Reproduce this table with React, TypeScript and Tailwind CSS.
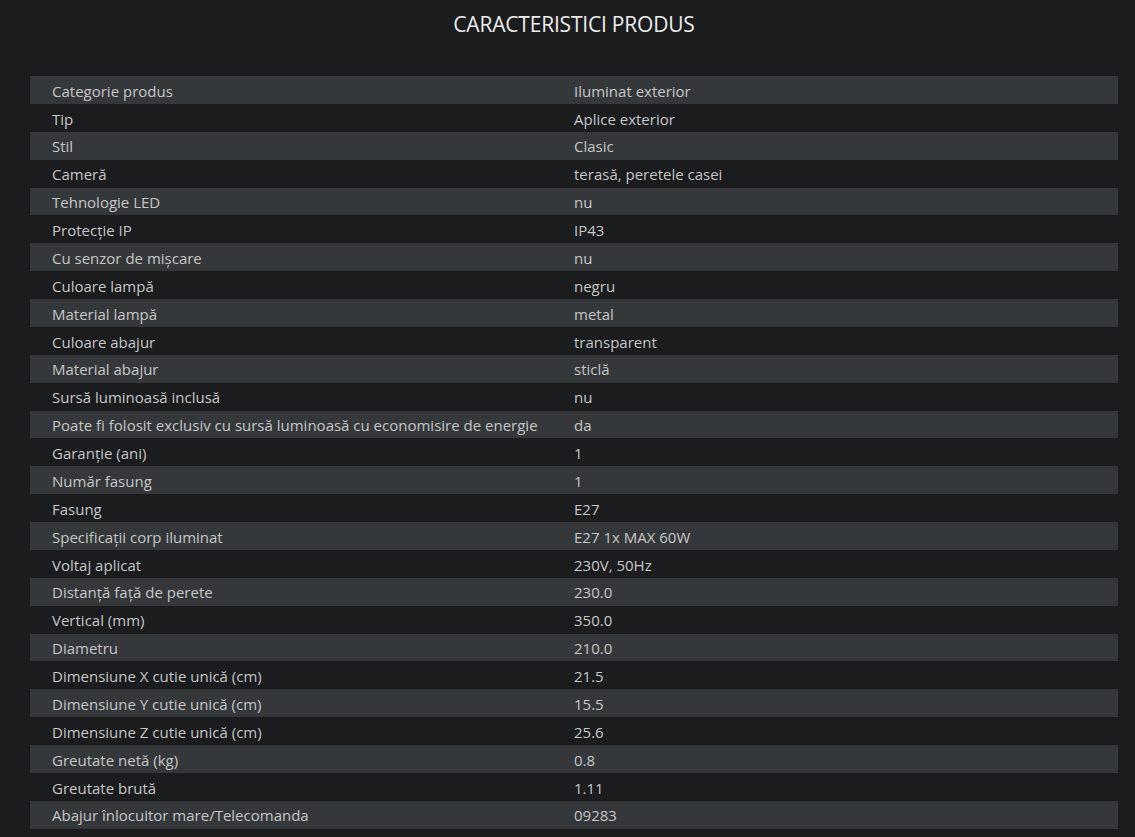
import React from "react";

const ROWS: [string, string][] = [
  ["Categorie produs", "Iluminat exterior"],
  ["Tip", "Aplice exterior"],
  ["Stil", "Clasic"],
  ["Cameră", "terasă, peretele casei"],
  ["Tehnologie LED", "nu"],
  ["Protecție IP", "IP43"],
  ["Cu senzor de mișcare", "nu"],
  ["Culoare lampă", "negru"],
  ["Material lampă", "metal"],
  ["Culoare abajur", "transparent"],
  ["Material abajur", "sticlă"],
  ["Sursă luminoasă inclusă", "nu"],
  ["Poate fi folosit exclusiv cu sursă luminoasă cu economisire de energie", "da"],
  ["Garanție (ani)", "1"],
  ["Număr fasung", "1"],
  ["Fasung", "E27"],
  ["Specificații corp iluminat", "E27 1x MAX 60W"],
  ["Voltaj aplicat", "230V, 50Hz"],
  ["Distanță față de perete", "230.0"],
  ["Vertical (mm)", "350.0"],
  ["Diametru", "210.0"],
  ["Dimensiune X cutie unică (cm)", "21.5"],
  ["Dimensiune Y cutie unică (cm)", "15.5"],
  ["Dimensiune Z cutie unică (cm)", "25.6"],
  ["Greutate netă (kg)", "0.8"],
  ["Greutate brută", "1.11"],
  ["Abajur înlocuitor mare/Telecomanda", "09283"],
];

export default function App() {
  return (
    <div className="min-h-[837px] w-full bg-[#1b1c1e] pt-[10px] font-['Open_Sans',sans-serif]">
      <div className="mx-[30px] w-[1088px]">
        <h2 className="h-[40px] text-center text-[21px] leading-[28px] tracking-[-0.2px] text-[#ececec]">
          CARACTERISTICI PRODUS
        </h2>
        <div className="mt-[26px] flex flex-col">
          {ROWS.map(([label, value], i) => (
            <div
              key={label}
              className={`flex h-[27.88px] items-center pt-[2px] text-[15px] text-[#c6c6c6] ${
                i % 2 === 0 ? "bg-[#35383b]" : ""
              }`}
            >
              <div className="w-[522px] pl-[22px]">{label}</div>
              <div className="pl-[22px]">{value}</div>
            </div>
          ))}
        </div>
      </div>
    </div>
  );
}
